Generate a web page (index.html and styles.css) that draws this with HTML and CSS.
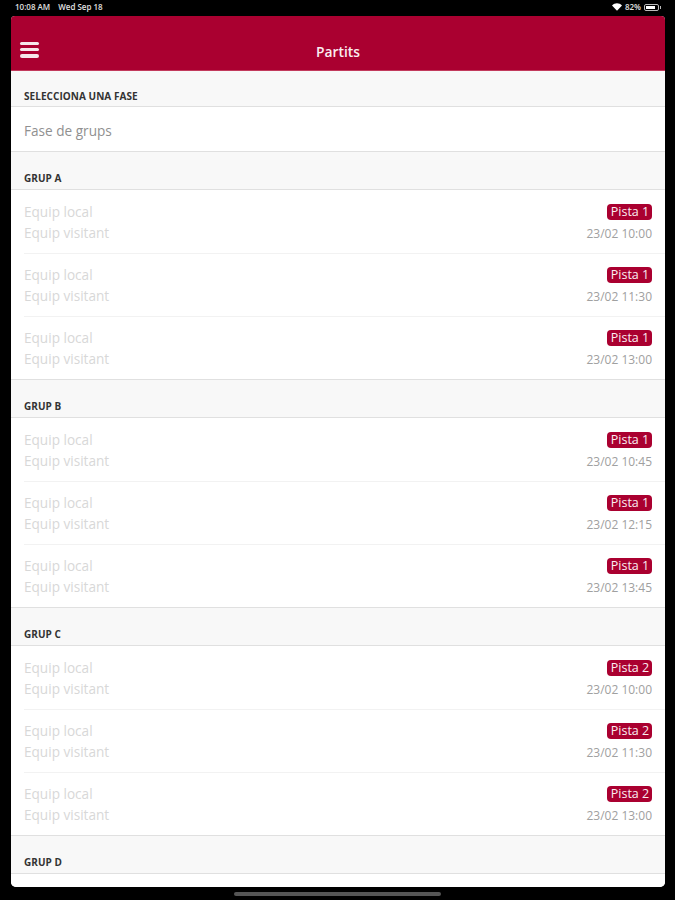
FILE: index.html
```html
<!DOCTYPE html>
<html lang="ca">
<head>
  <meta charset="UTF-8" />
  <title>Partits</title>
  <meta name="viewport" content="width=device-width, initial-scale=1.0" />
  <link rel="stylesheet" href="styles.css">
</head>
<body>
  <div class="status-bar">
    <div class="status-left"><span>10:08 AM</span><span>Wed Sep 18</span></div>
    <div class="status-right">
      <svg class="wifi" viewBox="0 0 12 9" width="10" height="8"><path d="M0 2.6C3.4-.8 8.6-.8 12 2.6L6 9z" fill="#fff"/></svg>
      <span>82%</span>
      <div class="battery"><div class="battery-level"></div></div>
      <div class="battery-tip"></div>
    </div>
  </div>

  <div id="app">
    <header class="topbar">
      <button class="menu-btn" aria-label="Menu">
        <span></span><span></span><span></span>
      </button>
      <h1>Partits</h1>
    </header>

    <div class="content">
      <div class="section-title first">SELECCIONA UNA FASE</div>
      <div class="phase">Fase de grups</div>

      <div class="section-title">GRUP A</div>
      <div class="matches">
        <div class="match">
          <div class="teams"><div>Equip local</div><div>Equip visitant</div></div>
          <div class="info"><span class="court">Pista 1</span><span class="date">23/02 10:00</span></div>
        </div>
        <div class="match">
          <div class="teams"><div>Equip local</div><div>Equip visitant</div></div>
          <div class="info"><span class="court">Pista 1</span><span class="date">23/02 11:30</span></div>
        </div>
        <div class="match">
          <div class="teams"><div>Equip local</div><div>Equip visitant</div></div>
          <div class="info"><span class="court">Pista 1</span><span class="date">23/02 13:00</span></div>
        </div>
      </div>

      <div class="section-title">GRUP B</div>
      <div class="matches">
        <div class="match">
          <div class="teams"><div>Equip local</div><div>Equip visitant</div></div>
          <div class="info"><span class="court">Pista 1</span><span class="date">23/02 10:45</span></div>
        </div>
        <div class="match">
          <div class="teams"><div>Equip local</div><div>Equip visitant</div></div>
          <div class="info"><span class="court">Pista 1</span><span class="date">23/02 12:15</span></div>
        </div>
        <div class="match">
          <div class="teams"><div>Equip local</div><div>Equip visitant</div></div>
          <div class="info"><span class="court">Pista 1</span><span class="date">23/02 13:45</span></div>
        </div>
      </div>

      <div class="section-title">GRUP C</div>
      <div class="matches">
        <div class="match">
          <div class="teams"><div>Equip local</div><div>Equip visitant</div></div>
          <div class="info"><span class="court">Pista 2</span><span class="date">23/02 10:00</span></div>
        </div>
        <div class="match">
          <div class="teams"><div>Equip local</div><div>Equip visitant</div></div>
          <div class="info"><span class="court">Pista 2</span><span class="date">23/02 11:30</span></div>
        </div>
        <div class="match">
          <div class="teams"><div>Equip local</div><div>Equip visitant</div></div>
          <div class="info"><span class="court">Pista 2</span><span class="date">23/02 13:00</span></div>
        </div>
      </div>

      <div class="section-title">GRUP D</div>
      <div class="matches"></div>
    </div>
  </div>

  <div class="home-bar"><div class="home-indicator"></div></div>
</body>
</html>
```

FILE: styles.css
```css
* {
  box-sizing: border-box;
}

html, body {
  height: 900px;
}

body {
  margin: 0;
  background: #000;
  color: #fff;
  font-family: "Open Sans", sans-serif;
  overflow: hidden;
  display: flex;
  flex-direction: column;
}

.status-bar {
  height: 16px;
  padding: 0 14px 2px 15px;
  display: flex;
  justify-content: space-between;
  align-items: center;
  font-size: 8px;
  font-weight: 600;
  line-height: 10px;
  color: #e0e0e0;
}

.status-left {
  display: flex;
  gap: 8px;
}

.status-right {
  display: flex;
  align-items: center;
  gap: 3px;
}

.battery {
  width: 15px;
  height: 7px;
  padding: 1px;
  border: 1px solid #bbb;
  border-radius: 2px;
}

.battery-level {
  width: 85%;
  height: 100%;
  background: #fff;
}

.battery-tip {
  width: 1px;
  height: 3px;
  margin-left: -2px;
  background: #bbb;
}

#app {
  flex: none;
  height: 871px;
  margin: 0 10px 0 11px;
  background: #f8f8f8;
  border-radius: 4px 4px 5px 5px;
  overflow: hidden;
  display: flex;
  flex-direction: column;
}

.topbar {
  flex: none;
  height: 55px;
  padding-left: 9px;
  background: #aa0030;
  border-bottom: 1px solid #c23a5c;
  display: flex;
  align-items: center;
  position: relative;
}

.menu-btn {
  width: 19px;
  height: 16px;
  padding: 0;
  margin-top: 13px;
  background: none;
  border: none;
  display: flex;
  flex-direction: column;
  justify-content: space-between;
}

.menu-btn span {
  display: block;
  height: 3.5px;
  border-radius: 2px;
  background: #f6e6ea;
}

.topbar h1 {
  position: absolute;
  left: 0;
  right: 0;
  top: 26px;
  margin: 0;
  font-size: 13.8px;
  font-weight: 600;
  line-height: 20px;
  text-align: center;
  color: #fbeef1;
}

.content {
  flex: 1;
  min-height: 0;
  overflow: hidden;
}

.section-title {
  height: 38px;
  padding: 19px 13px 0;
  font-size: 10px;
  font-weight: 700;
  line-height: 14px;
  letter-spacing: 0.05px;
  color: #333;
  border-bottom: 1px solid #e0e0e0;
}

.section-title.first {
  height: 36px;
  padding-top: 18px;
}

.phase {
  height: 45px;
  padding: 0 13px;
  background: #fff;
  border-bottom: 1px solid #e0e0e0;
  font-size: 13.6px;
  line-height: 47px;
  color: #909090;
}

.matches {
  background: #fff;
  border-bottom: 1px solid #e0e0e0;
  padding-left: 13px;
}

/* Grup D is cut off by the bottom of the screen */
.matches:empty {
  height: 20px;
  border-bottom: none;
}

.match {
  height: 63px;
  padding: 11px 13px 0 0;
  display: flex;
  justify-content: space-between;
}

.match + .match {
  padding-top: 10px;
  border-top: 1px solid #f2f2f2;
}

.teams {
  font-size: 13.6px;
  line-height: 21px;
  color: #d8d8d8;
}

.info {
  display: flex;
  flex-direction: column;
  align-items: flex-end;
}

.court {
  height: 16px;
  margin-top: 3px;
  padding: 0 2px 0 3px;
  background: #aa0030;
  border-radius: 4px;
  font-size: 12.5px;
  font-weight: 400;
  line-height: 16px;
  color: #fbeef1;
  min-width: 45px;
  text-align: center;
}

.date {
  margin-top: 5px;
  font-size: 12px;
  line-height: 18px;
  color: #a0a0a0;
}

.home-bar {
  flex: 1;
  display: flex;
  justify-content: center;
  padding-top: 5px;
}

.home-indicator {
  width: 207px;
  height: 4px;
  border-radius: 2px;
  background: #555;
}
```
